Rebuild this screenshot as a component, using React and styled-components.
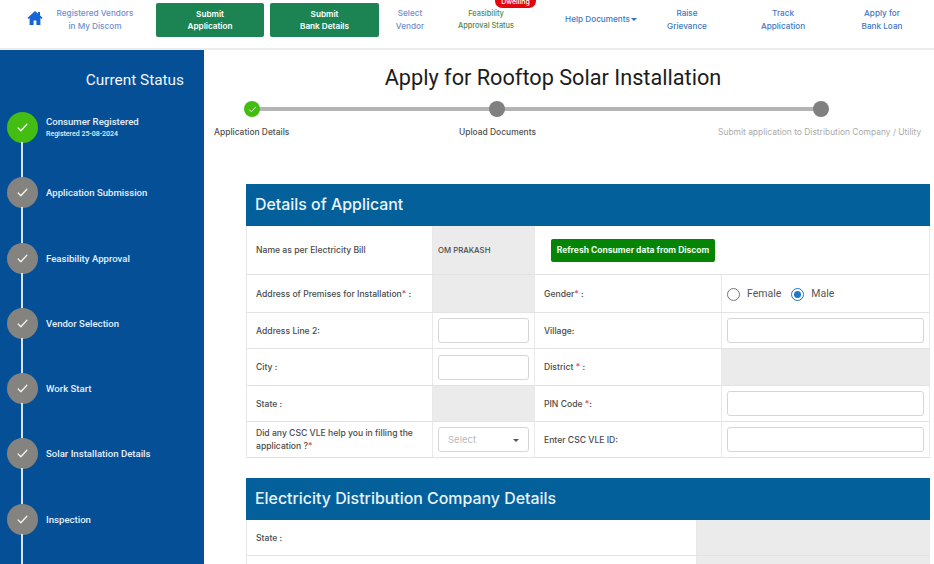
import React from "react";
import styled, { createGlobalStyle } from "styled-components";

const Global = createGlobalStyle`
  html, body { margin: 0; padding: 0; background: #fff; }
  body { width: 934px; height: 564px; overflow: hidden; font-family: Inter, "Open Sans", sans-serif; }
  * { box-sizing: border-box; }
`;

const Page = styled.div`
  width: 934px;
  height: 564px;
  overflow: hidden;
  display: flex;
  flex-direction: column;
`;

const Header = styled.header`
  flex: 0 0 50px;
  height: 50px;
  padding: 3px 0 0 27px;
  display: flex;
  align-items: flex-start;
  border-bottom: 2px solid #ececec;
  background: #fff;
`;

const HomeLink = styled.a`
  width: 16px;
  height: 33px;
  display: flex;
  align-items: center;
  color: #1565d8;
  padding-bottom: 3px;
`;

const NavLink = styled.a`
  position: relative;
  width: ${(p) => p.$w}px;
  height: 33px;
  padding-left: ${(p) => p.$pl || 0}px;
  display: flex;
  align-items: center;
  justify-content: center;
  text-align: center;
  white-space: nowrap;
  font-size: ${(p) => p.$size || 8.2}px;
  line-height: ${(p) => p.$lh || 12.2}px;
  font-weight: 500;
  color: ${(p) => p.$color || "#3f78c4"};
`;

const Caret = styled.span`
  display: inline-block;
  margin-left: 1px;
  border-left: 3px solid transparent;
  border-right: 3px solid transparent;
  border-top: 3px solid #2f6fc0;
  vertical-align: middle;
`;

const Badge = styled.span`
  position: absolute;
  left: 54px;
  top: -14px;
  width: 41px;
  height: 19px;
  border-radius: 7px;
  background: #e3060f;
  color: #fff;
  font-size: 7px;
  line-height: 7px;
  padding-top: 9px;
  text-align: center;
`;

const GreenButton = styled.a`
  width: ${(p) => p.$w}px;
  height: 34px;
  margin-left: ${(p) => p.$ml}px;
  display: flex;
  align-items: center;
  justify-content: center;
  text-align: center;
  background: #1b8452;
  border-radius: 2px;
  color: #fff;
  font-size: 8.2px;
  line-height: 12.2px;
  font-weight: 600;
`;

const Body = styled.div`
  flex: 1;
  display: flex;
  min-height: 0;
`;

const Sidebar = styled.aside`
  flex: 0 0 204px;
  background: #044f96;
  color: #fff;
  font-family: Roboto, sans-serif;
  padding-top: 21px;
`;

const SideTitle = styled.h2`
  margin: 0 20px 0 0;
  text-align: right;
  font-size: 15.4px;
  line-height: 19px;
  font-weight: 400;
  color: #f0f6fc;
`;

const Timeline = styled.ol`
  list-style: none;
  margin: 22px 0 0;
  padding: 0;
`;

const TimelineItem = styled.li`
  position: relative;
  height: 65.3px;
  padding-left: 7px;
  display: flex;
  align-items: flex-start;
  gap: 8px;
  &::after {
    content: "";
    position: absolute;
    left: 21px;
    top: 30px;
    width: 2px;
    height: 36px;
    background: #d5e6f5;
  }
`;

const Dot = styled.span`
  flex: 0 0 31px;
  height: 31px;
  border-radius: 50%;
  background: ${(p) => (p.$done ? "#43bd12" : "#85837f")};
  display: flex;
  align-items: center;
  justify-content: center;
  color: #f4f4f4;
`;

const StepText = styled.div`
  padding-top: ${(p) => (p.$sub ? 3 : 9)}px;
`;

const StepName = styled.div`
  font-size: 9.6px;
  line-height: 13px;
  font-weight: 500;
  color: #e4f0fb;
`;

const StepSub = styled.div`
  font-size: 7px;
  line-height: 12px;
  font-weight: 500;
  color: #e4f0fb;
`;

const Main = styled.main`
  flex: 1;
  min-width: 0;
  padding: 0 4px 0 10px;
`;

const Title = styled.h1`
  margin: 13px 0 0;
  text-align: center;
  font-family: Roboto, sans-serif;
  font-size: 21.7px;
  line-height: 30px;
  font-weight: 400;
  color: #1c1c1c;
  padding-right: 38px;
`;

const StepperBar = styled.div`
  position: relative;
  height: 16px;
  margin: 8px 0 0 30px;
  width: 585px;
  &::before {
    content: "";
    position: absolute;
    left: 8px;
    right: 8px;
    top: 6px;
    height: 4px;
    background: #b4b4b4;
  }
`;

const StepperDot = styled.span`
  position: absolute;
  left: ${(p) => p.$x}px;
  top: 0;
  width: 16px;
  height: 16px;
  border-radius: 50%;
  background: ${(p) => (p.$done ? "#43bd12" : "#808080")};
  display: flex;
  align-items: center;
  justify-content: center;
  color: #e9f9de;
`;

const StepperLabels = styled.div`
  display: grid;
  grid-template-columns: 245px 259px 1fr;
  margin-top: 9px;
  height: 12px;
  font-size: 8.45px;
  line-height: 12px;
  white-space: nowrap;
`;

const StepperLabel = styled.span`
  color: ${(p) => (p.$muted ? "#ababab" : "#505050")};
  font-weight: ${(p) => (p.$muted ? 400 : 500)};
`;

const Panel = styled.section`
  margin: ${(p) => p.$mt}px 0 0 32px;
  width: 684px;
`;

const PanelHead = styled.h3`
  margin: 0;
  height: 42px;
  padding: 0 0 2px 9px;
  display: flex;
  align-items: center;
  background: #04609b;
  color: #e8f4fb;
  font-size: 15.9px;
  font-weight: 500;
`;

const FormGrid = styled.div`
  display: grid;
  grid-template-columns: ${(p) => p.$cols};
  grid-template-rows: ${(p) => p.$rows};
  border-left: 1px solid #e6e6e6;
`;

const Cell = styled.div`
  display: flex;
  align-items: center;
  min-width: 0;
  grid-column: span ${(p) => p.$span || 1};
  padding: ${(p) => (p.$pad === undefined ? 1 : 0)}px ${(p) => (p.$pad ?? 9)}px 0 ${(p) => (p.$pad ?? 9)}px;
  border-bottom: 1px solid #e3e3e3;
  border-right: 1px solid #e9e9e9;
  background: ${(p) => (p.$grey ? "#ebebeb" : "#fff")};
  font-size: 8.6px;
  line-height: 12.6px;
  font-weight: 500;
  color: #4a4a4a;
`;

const NameValue = styled.span`
  font-size: 7.8px;
`;

const Req = styled.span`
  color: #d9534f;
`;

const TextBox = styled.div`
  width: 100%;
  height: 25px;
  background: #fff;
  border: 1px solid #d6d6d6;
  border-radius: 3px;
`;

const SelectBox = styled(TextBox)`
  display: flex;
  align-items: center;
  justify-content: space-between;
  padding: 2px 9px 0;
  color: #b9b9b9;
  font-size: 9.5px;
  font-weight: 400;
  &::after {
    content: "";
    border-left: 3px solid transparent;
    border-right: 3px solid transparent;
    border-top: 3px solid #555;
  }
`;

const RefreshButton = styled.a`
  width: 164px;
  height: 23px;
  margin-left: 7px;
  display: flex;
  align-items: center;
  justify-content: center;
  border-radius: 2px;
  background: #068406;
  color: #e9ffe9;
  font-size: 8.5px;
  font-weight: 700;
  white-space: nowrap;
`;

const RadioGroup = styled.div`
  display: flex;
  align-items: center;
  padding-top: 2px;
  font-family: Roboto, sans-serif;
  font-size: 10.5px;
  font-weight: 400;
  color: #555;
`;

const Radio = styled.span`
  width: 13px;
  height: 13px;
  border-radius: 50%;
  margin: 0 7px 0 ${(p) => p.$ml || 0}px;
  border: ${(p) => (p.$on ? "1.5px solid #1f78c8" : "1.5px solid #777")};
  display: flex;
  align-items: center;
  justify-content: center;
  &::after {
    content: "";
    width: 7px;
    height: 7px;
    border-radius: 50%;
    background: ${(p) => (p.$on ? "#1f78c8" : "transparent")};
  }
`;

const Check = ({ size }) => (
  <svg width={size} height={size} viewBox="0 0 24 24" fill="none" stroke="currentColor" strokeWidth="2.4" strokeLinecap="round" strokeLinejoin="round">
    <path d="M4 13l5 5L20 6" />
  </svg>
);

const steps = [
  { name: "Consumer Registered", sub: "Registered 25-08-2024", done: true },
  { name: "Application Submission" },
  { name: "Feasibility Approval" },
  { name: "Vendor Selection" },
  { name: "Work Start" },
  { name: "Solar Installation Details" },
  { name: "Inspection" },
  { name: "Commissioning" },
];

export default function App() {
  return (
    <Page>
      <Global />
      <Header>
        <HomeLink aria-label="Home">
          <svg width="16" height="16" viewBox="0 0 16 16" fill="currentColor">
            <path d="M8 1L0.4 8l1 1.1L2.6 8v7h4v-4.6h2.8V15h4V8l1.2 1.1 1-1.1L13 5.2V2h-2v1.4z" />
          </svg>
        </HomeLink>
        <NavLink $w={104} $color="#6d8fd0">Registered Vendors<br />in My Discom</NavLink>
        <GreenButton $w={108} $ml={9}>Submit<br />Application</GreenButton>
        <GreenButton $w={109} $ml={6}>Submit<br />Bank Details</GreenButton>
        <NavLink $w={62} $color="#6d8fd0">Select<br />Vendor</NavLink>
        <NavLink $w={90} $size={7.4} $lh={11.4} $color="#4f8a52">
          Feasibility<br />Approval Status
          <Badge>Dwelling</Badge>
        </NavLink>
        <NavLink $w={134} $pl={6}>Help Documents<Caret /></NavLink>
        <NavLink $w={44}>Raise<br />Grievance</NavLink>
        <NavLink $w={148}>Track<br />Application</NavLink>
        <NavLink $w={50}>Apply for<br />Bank Loan</NavLink>
      </Header>
      <Body>
        <Sidebar>
          <SideTitle>Current Status</SideTitle>
          <Timeline>
            {steps.map((s) => (
              <TimelineItem key={s.name}>
                <Dot $done={s.done}><Check size={13} /></Dot>
                <StepText $sub={!!s.sub}>
                  <StepName>{s.name}</StepName>
                  {s.sub && <StepSub>{s.sub}</StepSub>}
                </StepText>
              </TimelineItem>
            ))}
          </Timeline>
        </Sidebar>
        <Main>
          <Title>Apply for Rooftop Solar Installation</Title>
          <StepperBar>
            <StepperDot $x={0} $done><Check size={9} /></StepperDot>
            <StepperDot $x={245} />
            <StepperDot $x={569} />
          </StepperBar>
          <StepperLabels>
            <StepperLabel>Application Details</StepperLabel>
            <StepperLabel>Upload Documents</StepperLabel>
            <StepperLabel $muted>Submit application to Distribution Company / Utility</StepperLabel>
          </StepperLabels>
          <Panel $mt={46}>
            <PanelHead>Details of Applicant</PanelHead>
            <FormGrid $cols="186px 102px 187px 1fr" $rows="49px 38px 36px 37px 36px 36px">
              <Cell>Name as per Electricity Bill</Cell>
              <Cell $grey $pad={5}><NameValue>OM PRAKASH</NameValue></Cell>
              <Cell $span={2}><RefreshButton>Refresh Consumer data from Discom</RefreshButton></Cell>

              <Cell>Address of Premises for Installation<Req>*</Req>&nbsp;:</Cell>
              <Cell $grey />
              <Cell>Gender<Req>*</Req>&nbsp;:</Cell>
              <Cell $pad={5}>
                <RadioGroup>
                  <Radio />Female
                  <Radio $on $ml={10} />Male
                </RadioGroup>
              </Cell>

              <Cell>Address Line 2:</Cell>
              <Cell $pad={5}><TextBox /></Cell>
              <Cell>Village:</Cell>
              <Cell $pad={5}><TextBox /></Cell>

              <Cell>City :</Cell>
              <Cell $pad={5}><TextBox /></Cell>
              <Cell>District <Req>&nbsp;*</Req>&nbsp;:</Cell>
              <Cell $grey />

              <Cell>State :</Cell>
              <Cell $grey />
              <Cell>PIN Code&nbsp;<Req>*</Req>:</Cell>
              <Cell $pad={5}><TextBox /></Cell>

              <Cell><span>Did any CSC VLE help you in filling the application ?<Req>*</Req></span></Cell>
              <Cell $pad={5}><SelectBox>Select</SelectBox></Cell>
              <Cell>Enter CSC VLE ID:</Cell>
              <Cell $pad={5}><TextBox /></Cell>
            </FormGrid>
          </Panel>
          <Panel $mt={20}>
            <PanelHead>Electricity Distribution Company Details</PanelHead>
            <FormGrid $cols="450px 1fr" $rows="36px 36px">
              <Cell>State :</Cell>
              <Cell $grey />
              <Cell>Electricity Distribution Company :</Cell>
              <Cell $grey />
            </FormGrid>
          </Panel>
        </Main>
      </Body>
    </Page>
  );
}
